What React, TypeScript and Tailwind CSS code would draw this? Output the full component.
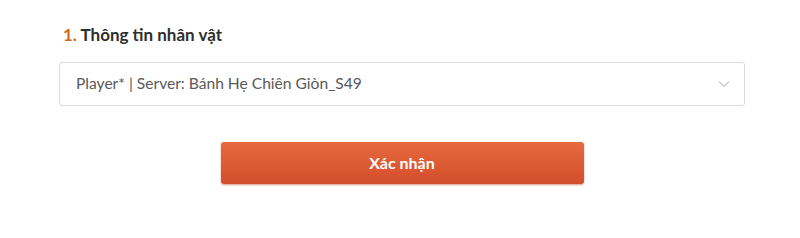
import React from "react";

const App: React.FC = () => {
  return (
    <div className="w-[800px] h-[238px] bg-white font-['Lato','Noto_Sans',sans-serif]">
      <div className="pl-[59px] pr-[55px] pt-[24px]">
        <h3 className="pl-[4px] text-[17px] leading-[22px] font-bold text-[#2e2e2e]">
          <span className="text-[#d2691e]">1.</span> Thông tin nhân vật
        </h3>
        <div className="mt-[16px] h-[44px] flex items-center justify-between border border-[#dcdcdc] rounded-[3px] pl-[16px] pr-[14px]">
          <span className="text-[15.6px] text-[#5a5a5a]">
            Player* | Server: Bánh Hẹ Chiên Giòn_S49
          </span>
          <svg width="12" height="8" viewBox="0 0 12 8" fill="none">
            <path d="M1 1.5L6 6.5L11 1.5" stroke="#c8c8c8" strokeWidth="1.2" />
          </svg>
        </div>
        <div className="flex justify-center mt-[36px]">
          <button
            type="submit"
            className="w-[363px] h-[42px] rounded-[3px] bg-gradient-to-b from-[#e66a3c] to-[#d34d2c] shadow-[0_1px_2px_rgba(180,60,20,0.5)] text-white text-[16px] font-bold"
          >
            Xác nhận
          </button>
        </div>
      </div>
    </div>
  );
};

export default App;
